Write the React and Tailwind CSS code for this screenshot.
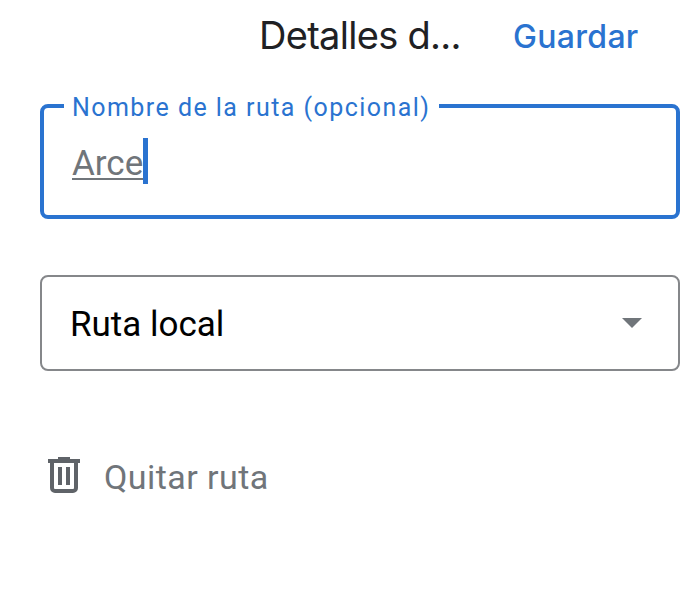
function TrashIcon() {
  return (
    <svg width="32" height="36" viewBox="0 0 32 36" fill="none" className="shrink-0">
      <path d="M10 0h12v2h10v4H0V2h10z" fill="#5f6368" />
      <path d="M4 5v26a3 3 0 0 0 3 3h18a3 3 0 0 0 3-3V5" stroke="#5f6368" strokeWidth="4" />
      <rect x="10" y="10" width="4" height="18" fill="#5f6368" />
      <rect x="18" y="10" width="4" height="18" fill="#5f6368" />
    </svg>
  );
}

export default function App() {
  return (
    <div className="w-[695px] h-[590px] bg-white overflow-hidden font-['Roboto',sans-serif]">
      {/* Header */}
      <div className="flex items-center h-[70px] pl-[259px]">
        <h1 className="w-[254px] font-['Inter',sans-serif] text-[38px] tracking-[-0.7px] leading-none text-[#202124] font-normal">Detalles d...</h1>
        <button className="pt-[3px] font-['Inter',sans-serif] text-[32px] tracking-[0.3px] leading-none font-medium text-[#2a73d0]">Guardar</button>
      </div>

      {/* Route name */}
      <div className="relative mt-[34px] ml-10 w-[640px] h-[115px] border-4 border-[#2a73d0] rounded-lg pl-7 pt-[30px]">
        <label className="absolute -top-[14px] left-5 bg-white pl-[8px] pr-[9px] text-[25px] leading-[28px] tracking-[1.45px] text-[#2a73d0] whitespace-nowrap">
          Nombre de la ruta (opcional)
        </label>
        <div className="flex items-center h-[46px]">
          <span className="text-[35px] leading-[44px] text-[#70757a] border-b-2 border-[#70757a] h-[38px]">Arce</span>
          <span className="w-[5px] h-[46px] bg-[#2a73d0]" />
        </div>
      </div>

      {/* Route type */}
      <div className="flex items-center justify-between mt-[56px] ml-10 w-[640px] h-[96px] border-2 border-[#85878a] rounded-lg pl-[28px] pr-[36px]">
        <span className="pt-[3px] text-[35px] leading-none text-black">Ruta local</span>
        <span className="w-0 h-0 border-x-[10px] border-x-transparent border-t-[10px] border-t-[#70757a]" />
      </div>

      {/* Remove */}
      <div className="flex items-center gap-[24px] mt-[86px] ml-[48px]">
        <TrashIcon />
        <span className="h-9 text-[34px] tracking-[0.45px] leading-[40px] text-[#70757a]">Quitar ruta</span>
      </div>
    </div>
  );
}
